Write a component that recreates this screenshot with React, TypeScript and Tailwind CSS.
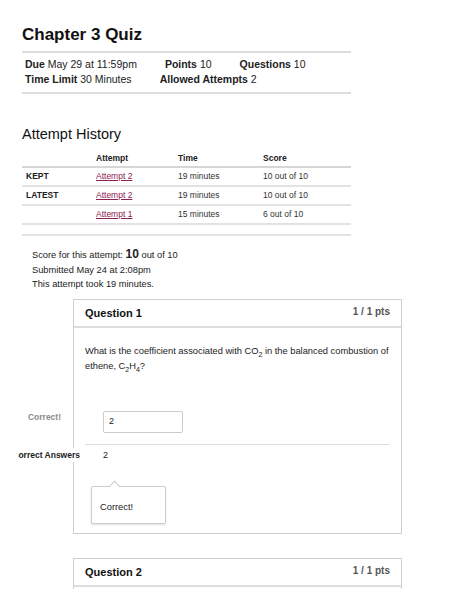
import type { ReactNode } from "react";

const attempts = [
  { tag: "KEPT", name: "Attempt 2", time: "19 minutes", score: "10 out of 10" },
  { tag: "LATEST", name: "Attempt 2", time: "19 minutes", score: "10 out of 10" },
  { tag: "", name: "Attempt 1", time: "15 minutes", score: "6 out of 10" },
];

function Detail({ label, value }: { label: string; value: string }) {
  return (
    <span className="whitespace-nowrap">
      <span className="font-bold">{label}</span> {value}
    </span>
  );
}

function QuestionHeader({ title }: { title: string }) {
  return (
    <div className="flex h-[28px] items-center justify-between border-b-2 border-[#dddddd] px-[11px] pt-[2px]">
      <span className="text-[11px] font-bold text-[#111]">{title}</span>
      <span className="-mt-[5px] text-[10px] font-bold text-[#555]">1 / 1 pts</span>
    </div>
  );
}

function SideLabel({ children, gap, muted }: { children: ReactNode; gap: string; muted?: boolean }) {
  return (
    <div
      className={`absolute right-full top-1/2 flex w-[62px] -translate-y-1/2 justify-end overflow-hidden bg-white text-[8.5px] font-bold leading-[14px] ${gap} ${
        muted ? "text-[#8c8c8c]" : "text-[#222]"
      }`}
    >
      <span className="shrink-0 whitespace-nowrap">{children}</span>
    </div>
  );
}

export default function App() {
  return (
    <div
      className="min-h-[613px] w-[474px] bg-white px-[22px] pt-[25px] text-[#222]"
      style={{ fontFamily: '"Liberation Sans", Arial, sans-serif' }}
    >
      <h1 className="text-[17px] font-bold leading-[20px] text-[#111]">Chapter 3 Quiz</h1>
      <div className="mt-[6px] w-[329px] border-b-2 border-[#dddddd]" />
      <div className="w-[329px] pl-[3px] pt-[4px] text-[10.5px] leading-[15px] text-[#222]">
        <div className="flex gap-x-[28px]">
          <Detail label="Due" value="May 29 at 11:59pm" />
          <Detail label="Points" value="10" />
          <Detail label="Questions" value="10" />
        </div>
        <div className="flex gap-x-[28px]">
          <Detail label="Time Limit" value="30 Minutes" />
          <Detail label="Allowed Attempts" value="2" />
        </div>
      </div>
      <div className="mt-[5px] w-[329px] border-b-2 border-[#dddddd]" />

      <h2 className="mt-[31px] text-[14.5px] leading-[18px] text-[#111]">Attempt History</h2>
      <div className="mt-[7px] w-[329px] text-[8.5px] text-[#333]">
        <div className="grid h-[18px] grid-cols-[70px_82px_85px_1fr] items-center border-b-2 border-[#d6d6d6] font-bold text-[#222]">
          <span />
          <span className="pl-[4px]">Attempt</span>
          <span className="pl-[4px]">Time</span>
          <span className="pl-[4px]">Score</span>
        </div>
        {attempts.map((a, i) => (
          <div
            key={i}
            className="grid h-[19px] grid-cols-[70px_82px_85px_1fr] items-center border-b-2 border-[#e2e2e2]"
          >
            <span className="pl-[4px] font-bold text-[#222]">{a.tag}</span>
            <span className="pl-[4px]">
              <span className="text-[#8a2150] underline">{a.name} </span>
            </span>
            <span className="pl-[4px]">{a.time}</span>
            <span className="pl-[4px]">{a.score}</span>
          </div>
        ))}
        <div className="h-[11px] border-b-2 border-[#e2e2e2]" />
      </div>

      <div className="pl-[10px] pt-[12px] text-[9.3px] leading-[14.5px] text-[#222]">
        <div>
          Score for this attempt: <span className="text-[12px] font-bold leading-none">10</span> out of 10
        </div>
        <div>Submitted May 24 at 2:08pm</div>
        <div>This attempt took 19 minutes.</div>
      </div>

      <div className="ml-[51px] mt-[7px] w-[329px] border border-[#cfcfcf]">
        <QuestionHeader title="Question 1" />
        <div className="px-[11px] pb-[9px] pt-[16px] text-[9.3px] leading-[15px] text-[#222]">
          <p>
            What is the coefficient associated with CO<sub className="align-[-2px] text-[7px] leading-none">2</sub> in
            the balanced combustion of ethene, C<sub className="align-[-2px] text-[7px] leading-none">2</sub>H
            <sub className="align-[-2px] text-[7px] leading-none">4</sub>?
          </p>

          <div className="relative ml-[18px] mt-[37px] w-[80px]">
            <SideLabel gap="mr-[42px] -mt-[5px]" muted>
              Correct!
            </SideLabel>
            <div className="flex h-[22px] items-center rounded-[2px] border border-[#cccccc] pl-[5px] text-[9px]">
              2
            </div>
          </div>

          <div className="mt-[11px] border-t border-[#dddddd]" />
          <div className="relative flex h-[21px] items-center pl-[18px] text-[9px]">
            <SideLabel gap="mr-[5px]">Correct Answers</SideLabel>
            2
          </div>

          <div className="relative ml-[6px] mt-[20px] flex h-[38px] w-[75px] items-center rounded-[2px] border border-[#cccccc] bg-white pl-[8px] pt-[6px] shadow-[0_1px_2px_rgba(0,0,0,0.12)]">
            <div className="absolute left-[19px] top-[-4.5px] h-[7px] w-[7px] rotate-45 border-l border-t border-[#cccccc] bg-white" />
            <span className="text-[9.3px] text-[#222]">Correct!</span>
          </div>
        </div>
      </div>

      <div className="ml-[51px] mt-[24px] w-[329px] border-x border-t border-[#cfcfcf]">
        <QuestionHeader title="Question 2" />
        <div className="h-[2px]" />
      </div>
    </div>
  );
}
